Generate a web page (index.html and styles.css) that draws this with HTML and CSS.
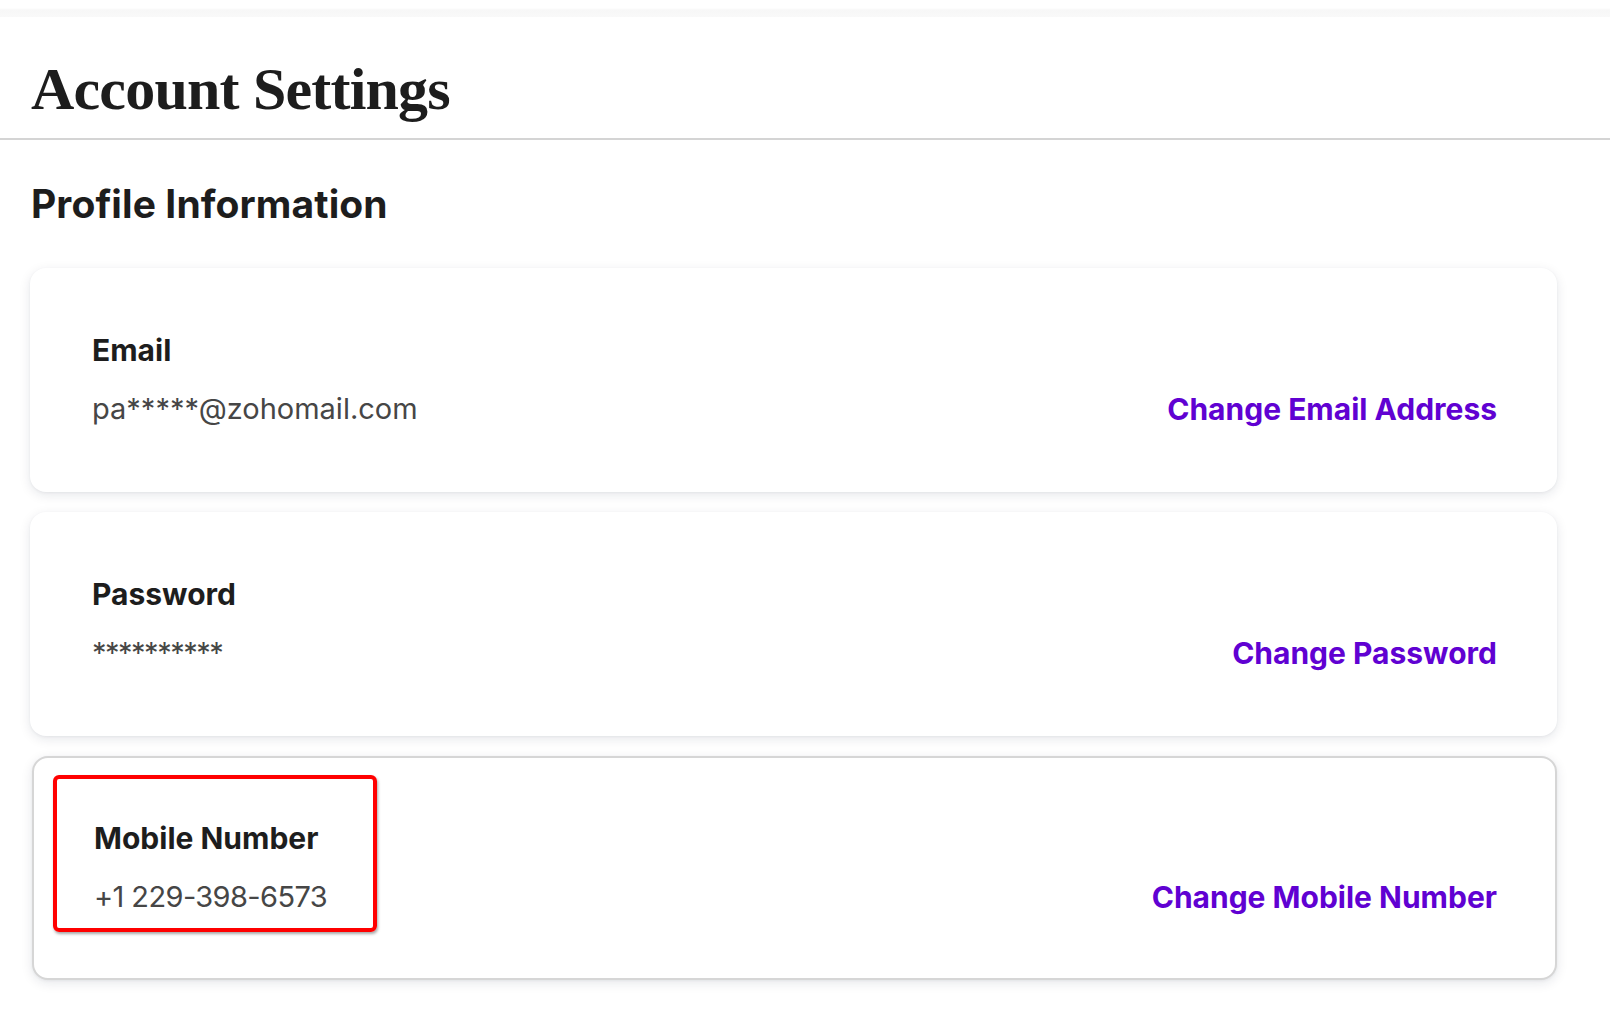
FILE: index.html
```html
<!DOCTYPE html>
<html lang="en">
<head>
<meta charset="utf-8">
<title>Account Settings</title>
<link rel="stylesheet" href="styles.css">
</head>
<body>
<div class="topbar"></div>
<header class="page-header">
  <h1 class="page-title">Account Settings</h1>
</header>
<main class="content">
  <h2 class="section-title">Profile Information</h2>
  <div class="cards">
    <section class="card">
      <div class="card-info">
        <div class="card-label">Email</div>
        <div class="card-value">pa*****@zohomail.com</div>
      </div>
      <a class="card-link" href="#">Change Email Address</a>
    </section>
    <section class="card">
      <div class="card-info">
        <div class="card-label">Password</div>
        <div class="card-value value-masked">**********</div>
      </div>
      <a class="card-link" href="#">Change Password</a>
    </section>
    <section class="card card-focused">
      <div class="card-info">
        <div class="card-label">Mobile Number</div>
        <div class="card-value value-phone">+1 229-398-6573</div>
      </div>
      <a class="card-link" href="#">Change Mobile Number</a>
      <div class="highlight"></div>
    </section>
  </div>
</main>
</body>
</html>
```
FILE: styles.css
```css
* { box-sizing: border-box; }
html, body {
  margin: 0;
  padding: 0;
  background: #ffffff;
}
body {
  font-family: "Inter", "Open Sans", sans-serif;
  color: #1d1d1d;
}
.topbar {
  height: 17px;
  background: linear-gradient(to bottom, #ffffff 0px, #ffffff 8px, #f7f7f7 10px, #f9f9f9 17px);
}
.page-header {
  height: 123px;
  padding: 0 31px;
  border-bottom: 2px solid #d4d4d4;
  display: flex;
  align-items: flex-start;
}
.page-title {
  margin: 0;
  padding-top: 38px;
  font-family: "Liberation Serif", "Times New Roman", serif;
  font-weight: 700;
  font-size: 60px;
  line-height: 68px;
  letter-spacing: -0.8px;
  color: #1d1d1d;
}
.content {
  padding: 0 53px 40px 30px;
}
.section-title {
  margin: 0;
  padding-top: 40px;
  padding-left: 1px;
  font-size: 39px;
  line-height: 48px;
  font-weight: 700;
  color: #1d1d1d;
  letter-spacing: 0.1px;
}
.cards {
  margin-top: 40px;
  display: flex;
  flex-direction: column;
  gap: 20px;
}
.card {
  position: relative;
  display: flex;
  justify-content: space-between;
  align-items: flex-end;
  background: #ffffff;
  border-radius: 16px;
  padding: 64px 60px 63px 62px;
  box-shadow: 0 3px 12px rgba(20, 30, 60, 0.10), 0 1px 3px rgba(20, 30, 60, 0.05);
}
.card-focused {
  margin-left: 2px;
  border: 2px solid #d6d6d6;
  border-radius: 16px;
  padding: 62px 58px 61px 60px;
}
.card-label {
  font-size: 30px;
  line-height: 36px;
  font-weight: 700;
  color: #1d1d1d;
}
.card-value {
  margin-top: 21px;
  font-size: 29px;
  line-height: 40px;
  font-weight: 400;
  color: #464646;
}
.value-masked {
  letter-spacing: -1.5px;
}
.value-phone {
  letter-spacing: -0.6px;
}
.card-link {
  font-size: 30px;
  line-height: 40px;
  font-weight: 700;
  color: #6001d2;
  text-decoration: none;
}
.highlight {
  position: absolute;
  left: 19px;
  top: 17px;
  width: 324px;
  height: 157px;
  border: 4px solid #ff0000;
  border-radius: 6px;
  box-shadow: 1px 2px 3px rgba(0, 0, 0, 0.35);
  pointer-events: none;
}
```
